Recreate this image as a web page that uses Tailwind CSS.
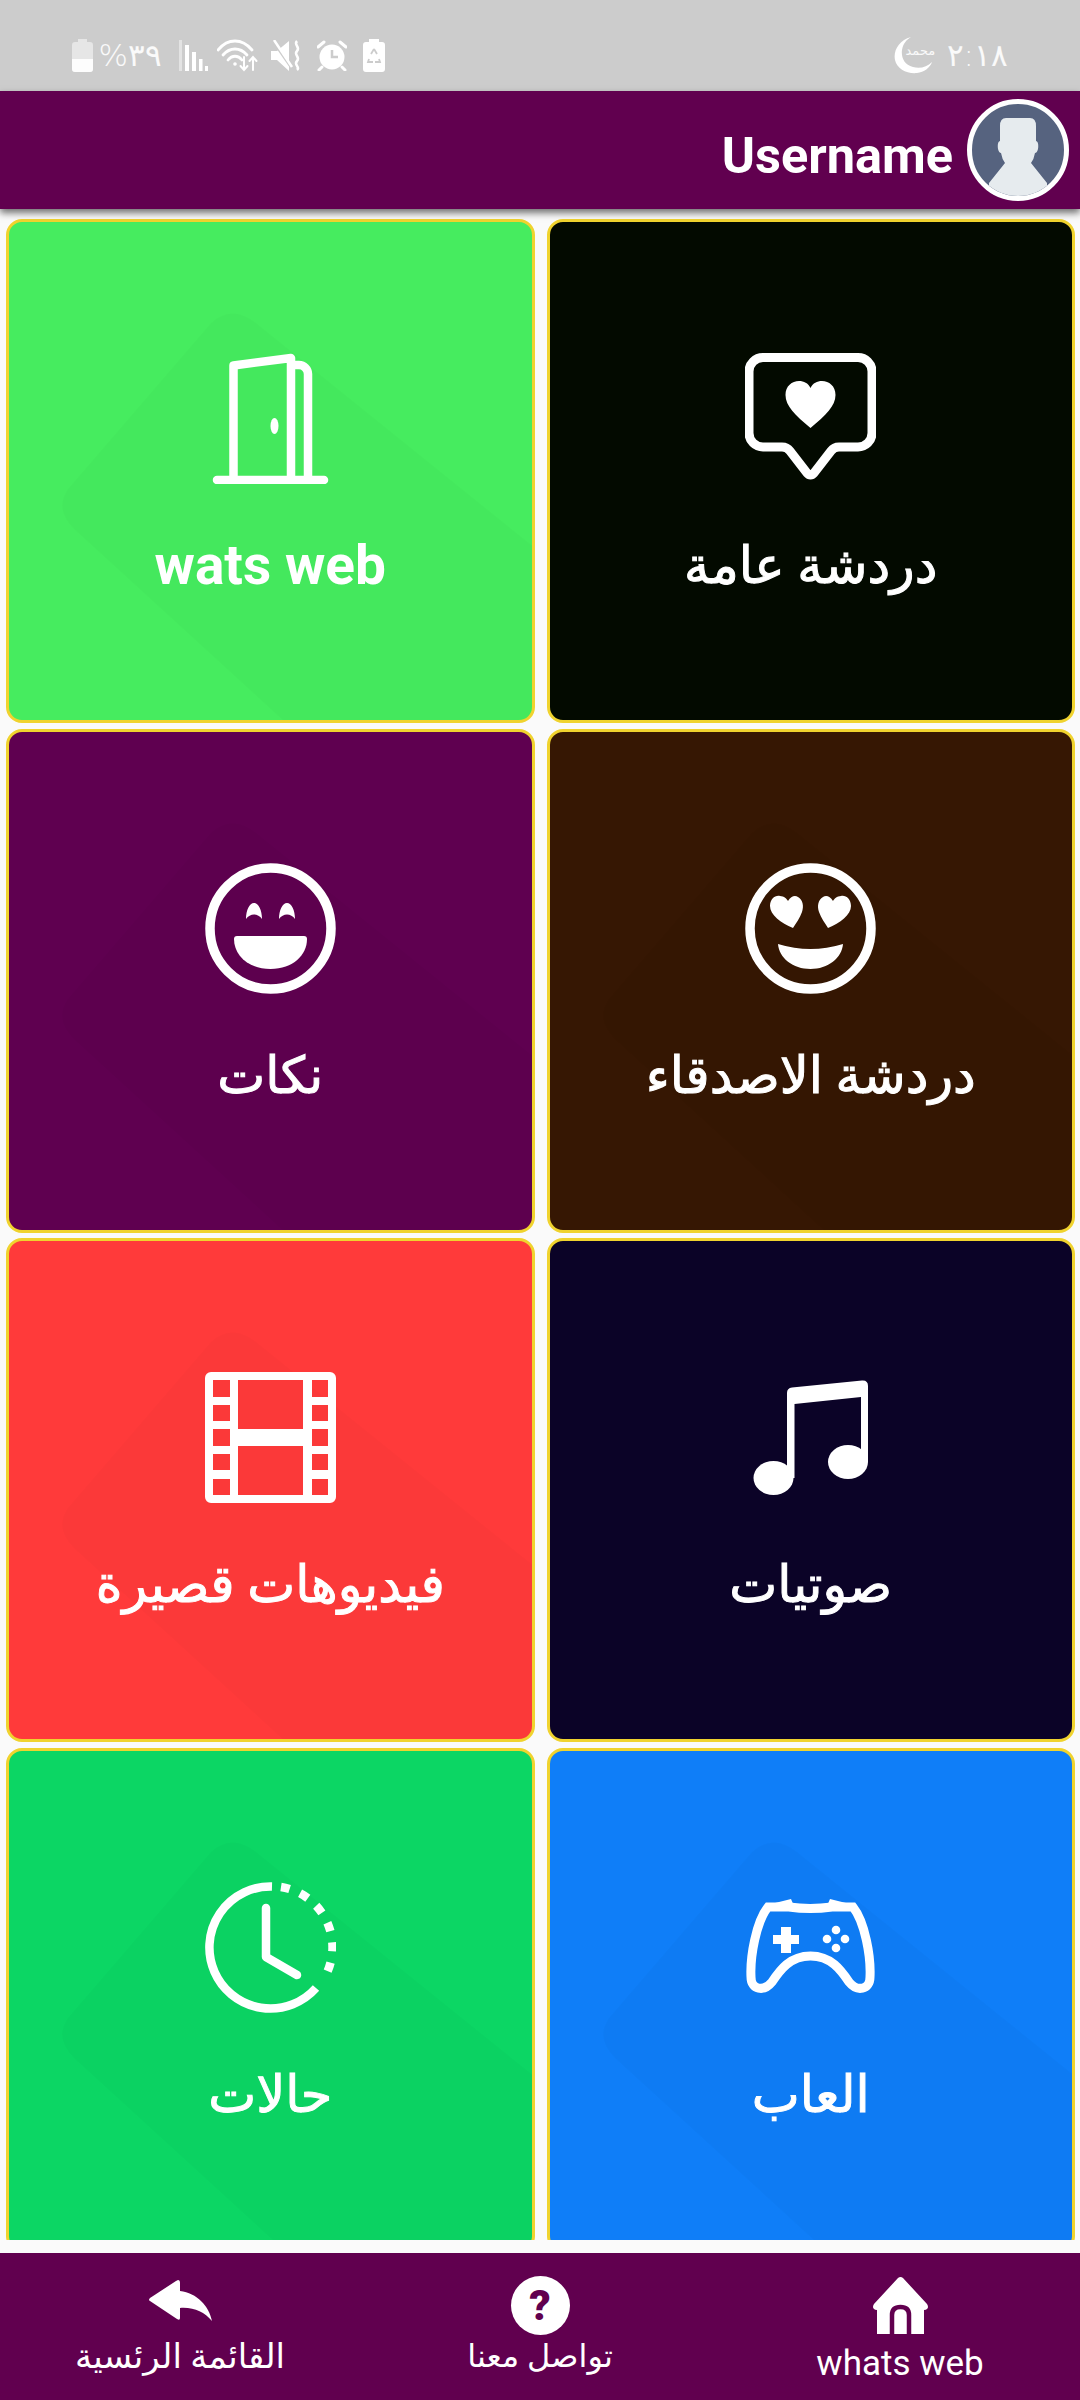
<!DOCTYPE html>
<html lang="ar">
  <head>
    <meta charset="UTF-8" />
    <meta name="viewport" content="width=device-width, initial-scale=1.0" />
    <title>Home Menu</title>
    <script src="https://cdn.jsdelivr.net/npm/@tailwindcss/browser@4"></script>
  </head>
  <body class="bg-[#fafafa] font-['Roboto','DejaVu_Sans',sans-serif]">
    <div class="w-[1080px] h-[2400px] flex flex-col overflow-hidden">
      <!-- status bar -->
      <div class="h-[91px] shrink-0 bg-[#cccccc] flex items-start justify-between pt-[37px] pl-[72px] pr-[72px] text-white/90">
        <div class="flex items-center h-[37px]">
          <svg class="w-[21px] h-[33px]" viewBox="0 0 21 33"><path d="M6 0h9v3h3a3 3 0 0 1 3 3v24a3 3 0 0 1-3 3H3a3 3 0 0 1-3-3V6a3 3 0 0 1 3-3h3z" fill="#fff" fill-opacity=".5"/><path d="M0 20h21v10a3 3 0 0 1-3 3H3a3 3 0 0 1-3-3z" fill="#fff" fill-opacity=".9"/></svg>
          <span dir="rtl" class="ml-[7px] w-[62px] text-[31px] leading-none font-['DejaVu_Sans',sans-serif] font-light">٣٩%</span>
          <svg class="ml-[17px] w-[29px] h-[31px]" viewBox="0 0 29 31" fill="#fff"><rect x="0" width="3" height="31" opacity=".45"/><rect x="6" y="5" width="4" height="26"/><rect x="13" y="12" width="4" height="19"/><rect x="20" y="19" width="3.5" height="12"/><rect x="26" y="26" width="3" height="5"/></svg>
          <svg class="ml-[9px] w-[41px] h-[33px]" viewBox="0 0 41 33" fill="none" stroke="#fff" stroke-width="2.8" stroke-linecap="round"><path d="M1 11C11 -1 25 -1 35 11"/><path d="M6 16C13 8 23 8 30 16"/><path d="M11 21C15 16 21 16 25 21"/><circle cx="18" cy="25" r="1.8" fill="#fff" stroke="none"/><path d="M27 18v13m-3.500-4 3.500 4 3.500-4" stroke-width="2"/><path d="M36 31V18m-3.500 4 3.500-4 3.500 4" stroke-width="2"/></svg>
          <svg class="ml-[13px] w-[30px] h-[31px]" viewBox="0 0 30 31" fill="#fff"><path d="M0 11h6l12-10v30L6 20H0z"/><path d="M2 1l18 26" stroke="#cccccc" stroke-width="3"/><path d="M3 0l18 27" stroke="#fff" stroke-width="2.500"/><path d="M26 1c-4 4 4 6 0 10s4 6 0 10 4 6 0 9" fill="none" stroke="#fff" stroke-width="2.500"/></svg>
          <svg class="ml-[16px] w-[30px] h-[31px]" viewBox="0 0 30 31" fill="#fff"><circle cx="15" cy="17" r="12.500"/><path d="M15 10v7h6" fill="none" stroke="#cccccc" stroke-width="2.500"/><path d="M1 7l6-5M29 7l-6-5M5 27l-3 3M25 27l3 3" stroke="#fff" stroke-width="3" stroke-linecap="round"/></svg>
          <svg class="ml-[16px] w-[22px] h-[33px]" viewBox="0 0 22 33" fill="#fff"><path d="M6 0h10v3h3a3 3 0 0 1 3 3v24a3 3 0 0 1-3 3H3a3 3 0 0 1-3-3V6a3 3 0 0 1 3-3h3z"/><path d="M11 10l-3 5M11 10l3 5M6 20l-1 3h5M16 20l1 3h-5" fill="none" stroke="#cccccc" stroke-width="1.800"/></svg>
        </div>
        <div class="flex items-center h-[37px]">
          <div class="relative w-[39px] h-[37px]">
            <svg class="w-[39px] h-[37px]" viewBox="0 0 39 37" fill="#fff"><path d="M17 0C5 3-1 14 1 23c2 9 12 14 22 13 7-1 13-5 15-11-5 5-12 7-19 5C10 28 7 20 8 13 9 7 12 3 17 0Z"/></svg>
            <span class="absolute left-[12px] top-[7px] text-[13px] leading-none font-['DejaVu_Sans',sans-serif]">محمد</span>
          </div>
          <span class="ml-[14px] text-[31px] leading-none tracking-[-5px] font-['DejaVu_Sans',sans-serif] font-light">٢:١٨</span>
        </div>
      </div>

      <!-- header -->
      <div class="relative z-10 h-[118px] shrink-0 bg-[#61004f] shadow-[0_4px_7px_rgba(0,0,0,0.55)] flex items-center justify-end pr-[11px]">
        <span class="mt-[13px] text-[50.500px] leading-none font-bold text-white">Username</span>
        <div class="ml-[14px] w-[102px] h-[102px] rounded-full border-[5px] border-white bg-[#56637f] overflow-hidden">
          <svg class="w-[92px] h-[92px]" viewBox="0 0 92 92"><path d="M34 14H58q6 0 6 8V37q3 1 2 8-1 4-3 4-1 6-4 10L75 79V92H17V79L33 59q-3-4-4-10-2 0-3-4-1-7 2-8V22q0-8 6-8Z" fill="#e6ebee"/></svg>
        </div>
      </div>

      <!-- menu grid -->
      <div class="h-[2031px] shrink-0 overflow-hidden pt-[10px] pl-[6px] pr-[5px]">
        <div class="grid grid-cols-2 gap-x-[12px] gap-y-[5.500px]">

          <div class="relative h-[504px] rounded-[16px] border-[3px] border-[#f0d32e] bg-[#46ec5f] overflow-hidden flex flex-col items-center pt-[131px] text-white">
            <svg class="absolute -left-[3px] -top-[3px] w-[529px] h-[504px]" viewBox="0 0 529 504"><path d="M205 104 Q226 85 250 104 L529 329 V504 H280 L68 310 Q48 290 62 270 Z" fill="#000" fill-opacity=".014"/></svg>
            <svg class="relative w-[131px] h-[131px]" viewBox="0 0 131 131" fill="none" stroke="#fff" stroke-width="8.500" stroke-linecap="round" stroke-linejoin="round"><path d="M28.500 126V12.500L86 5V126"/><path d="M90 12h4a9 9 0 0 1 9 9V126"/><path d="M12 127H119"/><ellipse cx="69.500" cy="73" rx="4" ry="8" fill="#fff" stroke="none"/></svg>
            <span class="relative mt-[51px] h-[60px] text-[55px] leading-[60px] font-bold whitespace-nowrap">wats web</span>
          </div>

          <div class="relative h-[504px] rounded-[16px] border-[3px] border-[#f0d32e] bg-[#030a00] overflow-hidden flex flex-col items-center pt-[131px] text-white">
            <svg class="relative w-[131px] h-[131px]" viewBox="0 0 131 131" fill="none" stroke="#fff" stroke-width="9" stroke-linejoin="round"><path d="M18 4.500H113a14 14 0 0 1 14 14V80a14 14 0 0 1-14 14H94q-5 0-8 4L69 120q-3.500 4-7 0L45 98q-3-4-8-4H18a14 14 0 0 1-14-14V18.500A14 14 0 0 1 18 4.500Z"/><path d="M65.500 75C50 62 40.500 53 40.500 42C40.500 33 47 28 54 28C59 28 63 30 65.500 35C68 30 72 28 77 28C84 28 90.500 33 90.500 42C90.500 53 81 62 65.500 75Z" fill="#fff" stroke="none"/></svg>
            <span class="relative mt-[52px] h-[60px] text-[51px] leading-[60px] [-webkit-text-stroke:1px_white] whitespace-nowrap" dir="rtl">دردشة عامة</span>
          </div>

          <div class="relative h-[504px] rounded-[16px] border-[3px] border-[#f0d32e] bg-[#5f0050] overflow-hidden flex flex-col items-center pt-[131px] text-white">
            <svg class="absolute -left-[3px] -top-[3px] w-[529px] h-[504px]" viewBox="0 0 529 504"><path d="M205 104 Q226 85 250 104 L529 329 V504 H280 L68 310 Q48 290 62 270 Z" fill="#000" fill-opacity=".02"/></svg>
            <svg class="relative w-[131px] h-[131px]" viewBox="0 0 131 131" fill="#fff"><circle cx="65.500" cy="65.500" r="60.500" fill="none" stroke="#fff" stroke-width="9.500"/><path d="M41 56C41 47 44.500 40 49 40C53.500 40 57 47 57 56C53 50 45 50 41 56Z"/><path d="M74 56C74 47 77.500 40 82 40C86.500 40 90 47 90 56C86 50 78 50 74 56Z"/><path d="M32 73H99Q102 73 102 76C102 92 88 106 65.500 106C43 106 29 92 29 76Q29 73 32 73Z"/></svg>
            <span class="relative mt-[52px] h-[60px] text-[51px] leading-[60px] [-webkit-text-stroke:1px_white] whitespace-nowrap" dir="rtl">نكات</span>
          </div>

          <div class="relative h-[504px] rounded-[16px] border-[3px] border-[#f0d32e] bg-[#361703] overflow-hidden flex flex-col items-center pt-[131px] text-white">
            <svg class="absolute -left-[3px] -top-[3px] w-[529px] h-[504px]" viewBox="0 0 529 504"><path d="M205 104 Q226 85 250 104 L529 329 V504 H280 L68 310 Q48 290 62 270 Z" fill="#000" fill-opacity=".018"/></svg>
            <svg class="relative w-[131px] h-[131px]" viewBox="0 0 131 131" fill="#fff"><circle cx="65.500" cy="65.500" r="60.500" fill="none" stroke="#fff" stroke-width="9.500"/><path d="M48 65C36 60 25 52 25 43C25 36 30 32 35 33C39 33 42 36 43 38C46 33 50 32 53 34C58 37 59 43 57 49C55 55 51 60 48 65Z"/><path d="M83 65C95 60 106 52 106 43C106 36 101 32 96 33C92 33 89 36 88 38C85 33 81 32 78 34C73 37 72 43 74 49C76 55 80 60 83 65Z"/><path d="M33 81Q65.500 91 98 81C97 95 83 106 65.500 106C48 106 34 95 33 81Z"/></svg>
            <span class="relative mt-[52px] h-[60px] text-[51px] leading-[60px] [-webkit-text-stroke:1px_white] whitespace-nowrap" dir="rtl">دردشة الاصدقاء</span>
          </div>

          <div class="relative h-[504px] rounded-[16px] border-[3px] border-[#f0d32e] bg-[#ff3a3a] overflow-hidden flex flex-col items-center pt-[131px] text-white">
            <svg class="absolute -left-[3px] -top-[3px] w-[529px] h-[504px]" viewBox="0 0 529 504"><path d="M205 104 Q226 85 250 104 L529 329 V504 H280 L68 310 Q48 290 62 270 Z" fill="#000" fill-opacity=".014"/></svg>
            <svg class="relative w-[131px] h-[131px]" viewBox="0 0 131 131"><path fill="#fff" fill-rule="evenodd" d="M6 0H125A6 6 0 0 1 131 6V125A6 6 0 0 1 125 131H6A6 6 0 0 1 0 125V6A6 6 0 0 1 6 0ZM8 8V25H25V8ZM8 33V49H25V33ZM8 57V74H25V57ZM8 82V98H25V82ZM8 107V123H25V107ZM33 8V57H98V8ZM33 74V123H98V74ZM107 8V25H123V8ZM107 33V49H123V33ZM107 57V74H123V57ZM107 82V98H123V82ZM107 107V123H123V107Z"/></svg>
            <span class="relative mt-[52px] h-[60px] text-[51px] leading-[60px] [-webkit-text-stroke:1px_white] whitespace-nowrap" dir="rtl">فيديوهات قصيرة</span>
          </div>

          <div class="relative h-[504px] rounded-[16px] border-[3px] border-[#f0d32e] bg-[#0b0327] overflow-hidden flex flex-col items-center pt-[131px] text-white">
            <svg class="relative w-[131px] h-[131px]" viewBox="0 0 131 131" fill="#fff"><path d="M42 106V21Q42 16 47 15.500L117 8.500Q123 8 123 14V90H116V25L49.500 32V106Z"/><ellipse cx="28.500" cy="106" rx="20" ry="17"/><ellipse cx="103" cy="90" rx="20" ry="17"/></svg>
            <span class="relative mt-[52px] h-[60px] text-[51px] leading-[60px] [-webkit-text-stroke:1px_white] whitespace-nowrap" dir="rtl">صوتيات</span>
          </div>

          <div class="relative h-[504px] rounded-[16px] border-[3px] border-[#f0d32e] bg-[#0cd664] overflow-hidden flex flex-col items-center pt-[131px] text-white">
            <svg class="absolute -left-[3px] -top-[3px] w-[529px] h-[504px]" viewBox="0 0 529 504"><path d="M205 104 Q226 85 250 104 L529 329 V504 H280 L68 310 Q48 290 62 270 Z" fill="#000" fill-opacity=".014"/></svg>
            <svg class="relative w-[131px] h-[131px]" viewBox="0 0 131 131" fill="none" stroke="#fff" stroke-width="8.500"><path d="M67 4.500A61 61 0 1 0 111 106"/><path d="M76 5A61 61 0 0 1 118 98" stroke-dasharray="9 11.300"/><path d="M61 26V75L92 93" stroke-linecap="round" stroke-linejoin="round"/></svg>
            <span class="relative mt-[52px] h-[60px] text-[51px] leading-[60px] [-webkit-text-stroke:1px_white] whitespace-nowrap" dir="rtl">حالات</span>
          </div>

          <div class="relative h-[504px] rounded-[16px] border-[3px] border-[#f0d32e] bg-[#0f7ef8] overflow-hidden flex flex-col items-center pt-[131px] text-white">
            <svg class="absolute -left-[3px] -top-[3px] w-[529px] h-[504px]" viewBox="0 0 529 504"><path d="M205 104 Q226 85 250 104 L529 329 V504 H280 L68 310 Q48 290 62 270 Z" fill="#000" fill-opacity=".02"/></svg>
            <svg class="relative w-[131px] h-[131px]" viewBox="0 0 131 131"><path d="M44 25Q65 28 87 25L108 25C120 40 126 75 125 95C125 108 112 110 104 100C96 88 86 74 65.500 74C45 74 35 88 27 100C19 110 6 108 6 95C5 75 11 40 23 25Z" fill="none" stroke="#fff" stroke-width="9"/><path d="M26 22L46 17 49 24H82L85 17 105 22 106 27H25Z" fill="#fff"/><path d="M36 45H46V53H54V62H46V71H36V62H28V53H36Z" fill="#fff"/><circle cx="91" cy="48" r="4.300" fill="#fff"/><circle cx="82" cy="57" r="4.300" fill="#fff"/><circle cx="100" cy="57" r="4.300" fill="#fff"/><circle cx="91" cy="66" r="4.300" fill="#fff"/></svg>
            <span class="relative mt-[52px] h-[60px] text-[51px] leading-[60px] [-webkit-text-stroke:1px_white] whitespace-nowrap" dir="rtl">العاب</span>
          </div>

        </div>
      </div>

      <div class="h-[13px] shrink-0 bg-[#fafafa]"></div>

      <!-- bottom nav -->
      <div class="flex-1 bg-[#61004f] grid grid-cols-3 text-white">
        <div class="flex flex-col items-center pt-[27px]">
          <svg class="w-[63px] h-[41px]" viewBox="0 0 63 41" fill="#fff"><path d="M29 0q2 0 2 3v8C48 13 60 26 63 41 55 32 45 27 31 28v10q0 3-3 1L1 21q-2-1 0-3L27 1z"/></svg>
          <span class="mt-[15px] text-[34px] leading-[40px] whitespace-nowrap" dir="rtl">القائمة الرئسية</span>
        </div>
        <div class="flex flex-col items-center pt-[23px]">
          <div class="w-[59px] h-[59px] rounded-full bg-white flex items-center justify-center text-[42px] leading-none font-black text-[#61004f]">?</div>
          <span class="mt-[1px] text-[32px] leading-[40px] whitespace-nowrap" dir="rtl">تواصل معنا</span>
        </div>
        <div class="flex flex-col items-center pt-[24px]">
          <svg class="w-[57px] h-[57px]" viewBox="0 0 57 57" fill="#fff"><path d="M26 1q2.500-2 5 0L55 27q3 5-3 6V57H5V33q-6-1-3-6z"/><path d="M20 57V38q0-8 8.500-8T37 38V57" fill="none" stroke="#61004f" stroke-width="4.500"/><path d="M26 57V39h5V57z" fill="#fff"/></svg>
          <span class="mt-[9px] text-[35px] leading-[42px] whitespace-nowrap">whats web</span>
        </div>
      </div>
    </div>
  </body>
</html>
